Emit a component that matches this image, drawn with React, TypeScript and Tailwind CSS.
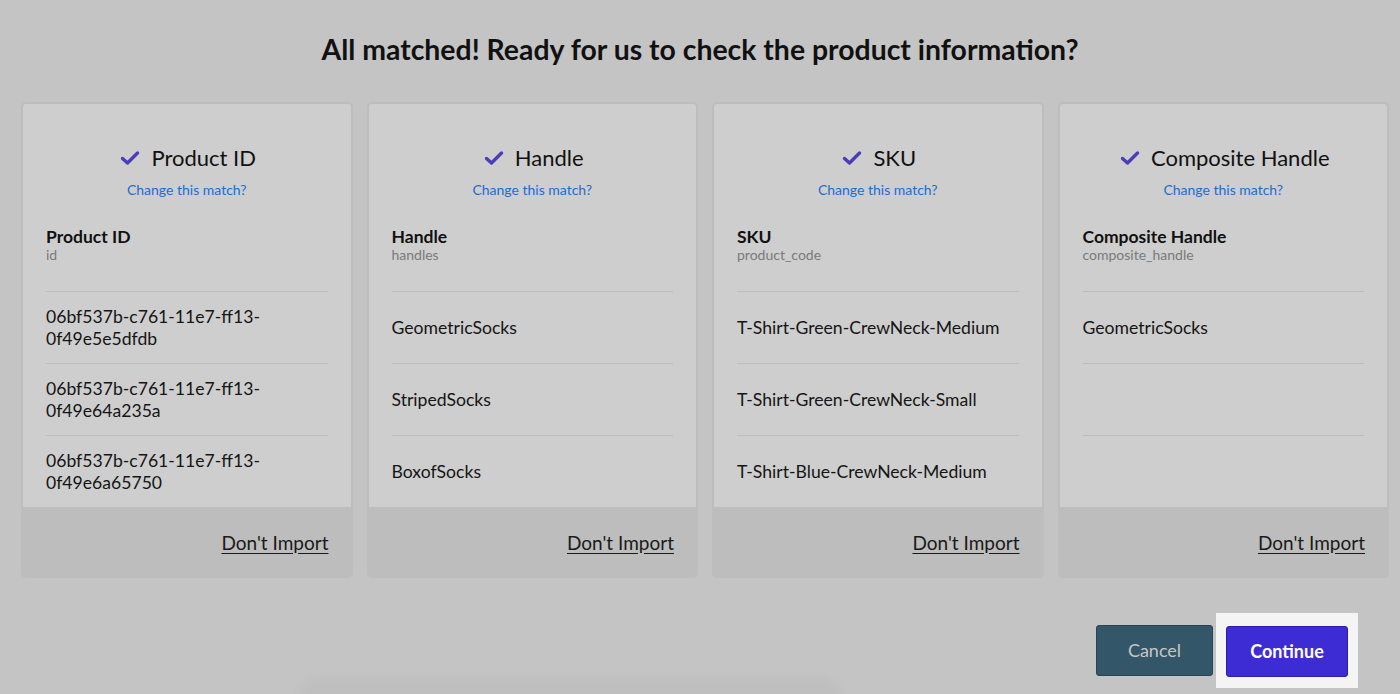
import React from "react";

type Card = {
  title: string;
  field: string;
  sub: string;
  rows: string[][];
};

const cards: Card[] = [
  {
    title: "Product ID",
    field: "Product ID",
    sub: "id",
    rows: [
      ["06bf537b-c761-11e7-ff13-", "0f49e5e5dfdb"],
      ["06bf537b-c761-11e7-ff13-", "0f49e64a235a"],
      ["06bf537b-c761-11e7-ff13-", "0f49e6a65750"],
    ],
  },
  {
    title: "Handle",
    field: "Handle",
    sub: "handles",
    rows: [["GeometricSocks"], ["StripedSocks"], ["BoxofSocks"]],
  },
  {
    title: "SKU",
    field: "SKU",
    sub: "product_code",
    rows: [
      ["T-Shirt-Green-CrewNeck-Medium"],
      ["T-Shirt-Green-CrewNeck-Small"],
      ["T-Shirt-Blue-CrewNeck-Medium"],
    ],
  },
  {
    title: "Composite Handle",
    field: "Composite Handle",
    sub: "composite_handle",
    rows: [["GeometricSocks"], [""], [""]],
  },
];

function Check() {
  return (
    <svg width="20" height="16" viewBox="0 0 20 16" className="shrink-0">
      <path
        d="M2.5 8.5 L7.5 13 L17.5 3"
        fill="none"
        stroke="#4a3db8"
        strokeWidth="3.4"
        strokeLinecap="round"
        strokeLinejoin="round"
      />
    </svg>
  );
}

function MatchCard({ c }: { c: Card }) {
  return (
    <div className="flex h-[476px] flex-col rounded-[5px] bg-[#bdbdbd] p-[2px] pb-0">
      <div className="flex h-[403px] flex-col overflow-hidden rounded-t-[3px] bg-[#cecece] px-[23px] pt-[42px]">
        <div className="flex h-6 items-center justify-center gap-[11px] pl-[3px]">
          <Check />
          <span className="text-[22px] leading-6 text-[#111]">{c.title}</span>
        </div>
        <div className="mt-[11px] text-center text-[14px] leading-[18px] text-[#1a6dcf]">
          Change this match?
        </div>
        <div className="mt-[28px] text-[17.5px] font-bold leading-5 text-[#111]">{c.field}</div>
        <div className="text-[14px] leading-4 text-[#7a7a7a]">{c.sub}</div>
        <div className="mt-[28px] flex flex-col">
          {c.rows.map((r, i) => (
            <div
              key={i}
              className="flex h-[72px] shrink-0 flex-col justify-center border-t border-[#bcbcbc] text-[17.6px] leading-[22px] text-[#151515]"
            >
              {r.map((l, j) => (
                <div key={j}>{l}</div>
              ))}
            </div>
          ))}
        </div>
      </div>
      <div className="flex flex-1 items-center justify-end pr-[22px]">
        <span className="text-[19px] leading-6 text-[#1a1a1a] underline underline-offset-[3px]">
          Don't Import
        </span>
      </div>
    </div>
  );
}

export default function App() {
  return (
    <div
      className="relative flex h-[694px] w-full flex-col overflow-hidden bg-[#c4c4c4]"
      style={{ fontFamily: "Lato, 'Noto Sans', sans-serif" }}
    >
      <h1 className="mt-[33px] text-center text-[28.4px] font-bold leading-8 text-[#111]">
        All matched! Ready for us to check the product information?
      </h1>
      <div className="mt-[37px] grid grid-cols-4 gap-[14px] pl-[21px] pr-[11px]">
        {cards.map((c) => (
          <MatchCard key={c.title} c={c} />
        ))}
      </div>
      <div className="mt-[35px] flex items-center justify-end pr-[42px]">
        <button className="h-[51px] w-[117px] rounded-[3px] border border-[#254454] bg-[#335668] text-[18px] text-[#c6c6c6]">
          Cancel
        </button>
        <div className="ml-[3px] bg-[#f4f4f4] px-[10px] pb-[11px] pt-[13px]">
          <button className="h-[51px] w-[122px] rounded-[3px] border border-[#2a1db0] bg-[#3d2bd4] text-[18px] font-bold text-white">
            Continue
          </button>
        </div>
      </div>
      <div className="absolute bottom-[-40px] left-[305px] h-[50px] w-[530px] rounded-[14px] bg-[#bfbfbf] shadow-[0_0_14px_4px_rgba(0,0,0,0.04)]" />
    </div>
  );
}
